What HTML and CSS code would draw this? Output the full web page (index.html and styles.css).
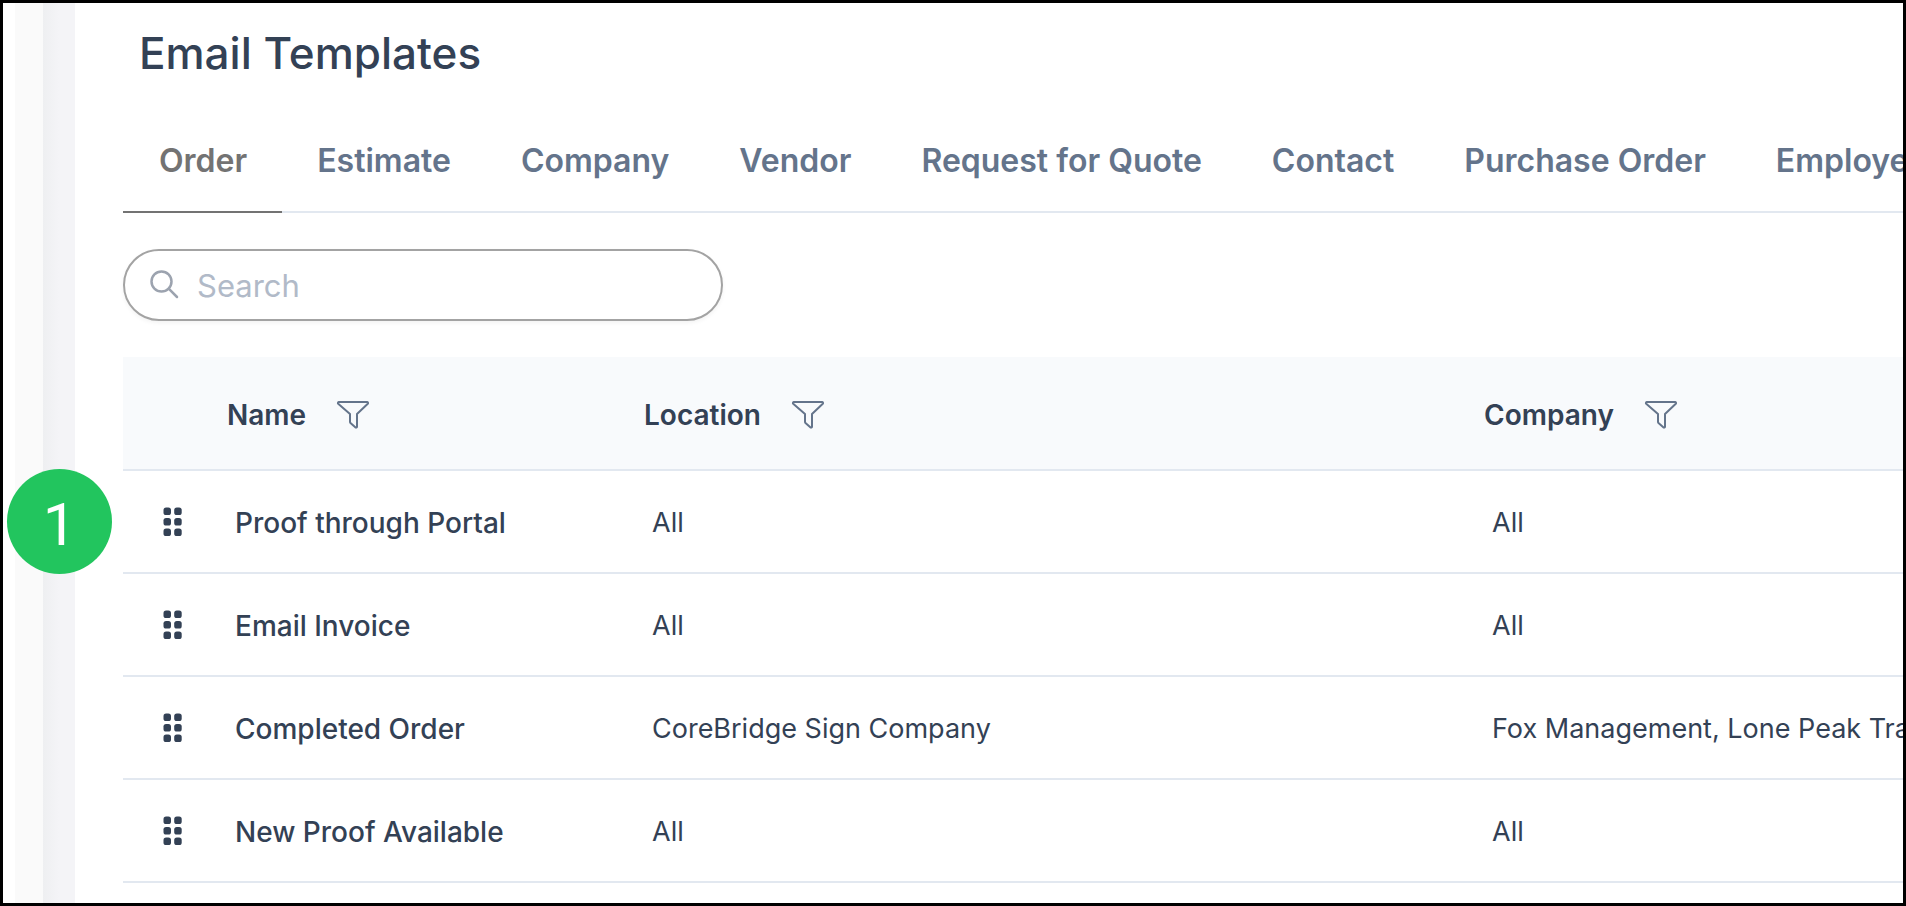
FILE: index.html
```
<!DOCTYPE html>
<html lang="en">
<head>
<meta charset="utf-8">
<meta name="viewport" content="width=device-width, initial-scale=1">
<title>Email Templates</title>
<link rel="stylesheet" href="styles.css">
</head>
<body>
<svg class="sprite" aria-hidden="true">
  <symbol id="filter" viewBox="0 0 34 30">
    <path d="M3 2h28a1 1 0 0 1 .8 1.700L21 14v12.500a1 1 0 0 1-1.700.8L14.500 23a2 2 0 0 1-.5-1.400V14L2.200 3.700A1 1 0 0 1 3 2z" fill="none" stroke="currentColor" stroke-width="2" stroke-linejoin="round"/>
  </symbol>
  <symbol id="grip" viewBox="0 0 20 30">
    <g fill="currentColor">
      <rect x="0.500" y="0.500" width="7.500" height="7.500" rx="2.600"/><rect x="11.200" y="0.500" width="7.500" height="7.500" rx="2.600"/>
      <rect x="0.500" y="11" width="7.500" height="7.500" rx="2.600"/><rect x="11.200" y="11" width="7.500" height="7.500" rx="2.600"/>
      <rect x="0.500" y="21.500" width="7.500" height="7.500" rx="2.600"/><rect x="11.200" y="21.500" width="7.500" height="7.500" rx="2.600"/>
    </g>
  </symbol>
</svg>
<div class="app">
  <div class="rail">
    <div class="rail-inner"></div>
    <div class="rail-edge"></div>
  </div>
  <main class="content">
    <h1 class="title">Email Templates</h1>
    <nav class="tabs">
      <a class="tab active" href="#order">Order</a>
      <a class="tab" href="#estimate">Estimate</a>
      <a class="tab" href="#company">Company</a>
      <a class="tab" href="#vendor">Vendor</a>
      <a class="tab" href="#quote">Request for Quote</a>
      <a class="tab" href="#contact">Contact</a>
      <a class="tab" href="#purchase">Purchase Order</a>
      <a class="tab" href="#employee">Employee</a>
    </nav>
    <label class="search">
      <svg class="search-icon" viewBox="0 0 30 30" aria-hidden="true"><circle cx="12.500" cy="11.500" r="10" fill="none" stroke="currentColor" stroke-width="2.500"/><path d="M19.700 18.700L28 27" stroke="currentColor" stroke-width="2.500" stroke-linecap="round"/></svg>
      <input class="search-input" type="text" placeholder="Search" aria-label="Search">
    </label>
    <table class="grid">
      <colgroup><col class="col-grip"><col class="col-name"><col class="col-location"><col></colgroup>
      <thead>
        <tr>
          <th></th>
          <th><div class="head">Name<button class="filter" aria-label="Filter name"><svg><use href="#filter"/></svg></button></div></th>
          <th><div class="head">Location<button class="filter" aria-label="Filter location"><svg><use href="#filter"/></svg></button></div></th>
          <th><div class="head">Company<button class="filter" aria-label="Filter company"><svg><use href="#filter"/></svg></button></div></th>
        </tr>
      </thead>
      <tbody>
        <tr>
          <td class="grip-cell"><button class="grip" aria-label="Reorder"><svg><use href="#grip"/></svg></button></td>
          <td class="name">Proof through Portal</td><td>All</td><td>All</td>
        </tr>
        <tr>
          <td class="grip-cell"><button class="grip" aria-label="Reorder"><svg><use href="#grip"/></svg></button></td>
          <td class="name">Email Invoice</td><td>All</td><td>All</td>
        </tr>
        <tr>
          <td class="grip-cell"><button class="grip" aria-label="Reorder"><svg><use href="#grip"/></svg></button></td>
          <td class="name">Completed Order</td><td>CoreBridge Sign Company</td><td>Fox Management, Lone Peak Tra</td>
        </tr>
        <tr>
          <td class="grip-cell"><button class="grip" aria-label="Reorder"><svg><use href="#grip"/></svg></button></td>
          <td class="name">New Proof Available</td><td>All</td><td>All</td>
        </tr>
      </tbody>
    </table>
  </main>
  <div class="badge">1</div>
</div>
</body>
</html>
```
FILE: styles.css
```
* { box-sizing: border-box; }
body {
  margin: 0;
  font-family: Inter, "Liberation Sans", sans-serif;
  color: #334155;
  background: #fff;
}
.sprite { display: none; }
.app {
  position: relative;
  display: flex;
  height: 100vh;
  overflow: hidden;
  border: 3px solid #000;
}
.rail { display: flex; flex: none; padding-left: 12px; }
.rail-inner { width: 28px; background: #fafafa; }
.rail-edge { width: 32px; background: linear-gradient(90deg, #eeeff1, #f4f4f7 50%); }
.content { flex: 1; min-width: 0; padding: 16px 0 0 48px; }
.title {
  margin: 0;
  padding-left: 16px;
  font-size: 44px;
  line-height: 68px;
  font-weight: 500;
}
.tabs {
  display: flex;
  margin-top: 24px;
  box-shadow: inset 0 -2px #e2e8f0;
  overflow: hidden;
  white-space: nowrap;
}
.tab {
  flex: none;
  padding: 28px 35px 30px;
  font-size: 32px;
  line-height: 44px;
  font-weight: 600;
  color: #64748b;
  text-decoration: none;
}
.active { padding-left: 36px; color: #737373; box-shadow: inset 0 -2px #737373; }
.search {
  display: flex;
  align-items: center;
  gap: 18px;
  width: 600px;
  max-width: 100%;
  height: 72px;
  margin: 36px 0;
  padding: 0 24px;
  border: 2px solid #a3a3a3;
  border-radius: 36px;
  box-shadow: 0 2px 4px rgba(0, 0, 0, 0.05);
}
.search-icon { flex: none; width: 30px; height: 30px; color: #9ca3af; }
.search-input {
  flex: 1;
  min-width: 0;
  padding: 0;
  border: 0;
  outline: 0;
  background: none;
  font: 400 31px Inter, "Liberation Sans", sans-serif;
  color: #334155;
}
.search-input::placeholder { color: #b1bac8; }
.grid {
  width: 100%;
  table-layout: fixed;
  border-collapse: separate;
  border-spacing: 0;
  font-size: 27px;
  line-height: 36px;
}
.col-grip { width: 80px; }
.col-name { width: 417px; }
.col-location { width: 840px; }
th {
  height: 114px;
  padding: 4px 24px 0;
  background: #f8fafc;
  border-bottom: 2px solid #e2e8f0;
  font-size: 28px;
  font-weight: 600;
  text-align: left;
}
td {
  height: 103px;
  padding: 2px 0 0 32px;
  border-bottom: 2px solid #e2e8f0;
  white-space: nowrap;
  overflow: hidden;
}
.name { font-size: 28px; font-weight: 500; }
.head { display: flex; align-items: center; gap: 30px; }
.filter, .grip {
  display: block;
  padding: 0;
  border: 0;
  background: none;
  color: #64748b;
}
.filter svg { display: block; width: 34px; height: 30px; }
.grip-cell { padding: 0 0 0 40px; }
.grip { color: #334155; }
.grip svg { display: block; width: 20px; height: 30px; }
.badge {
  position: absolute;
  left: 4px;
  top: 466px;
  width: 105px;
  height: 105px;
  border-radius: 50%;
  background: #22c55e;
  color: #fff;
  font: 400 60px/112px Roboto, sans-serif;
  text-align: center;
}
```
